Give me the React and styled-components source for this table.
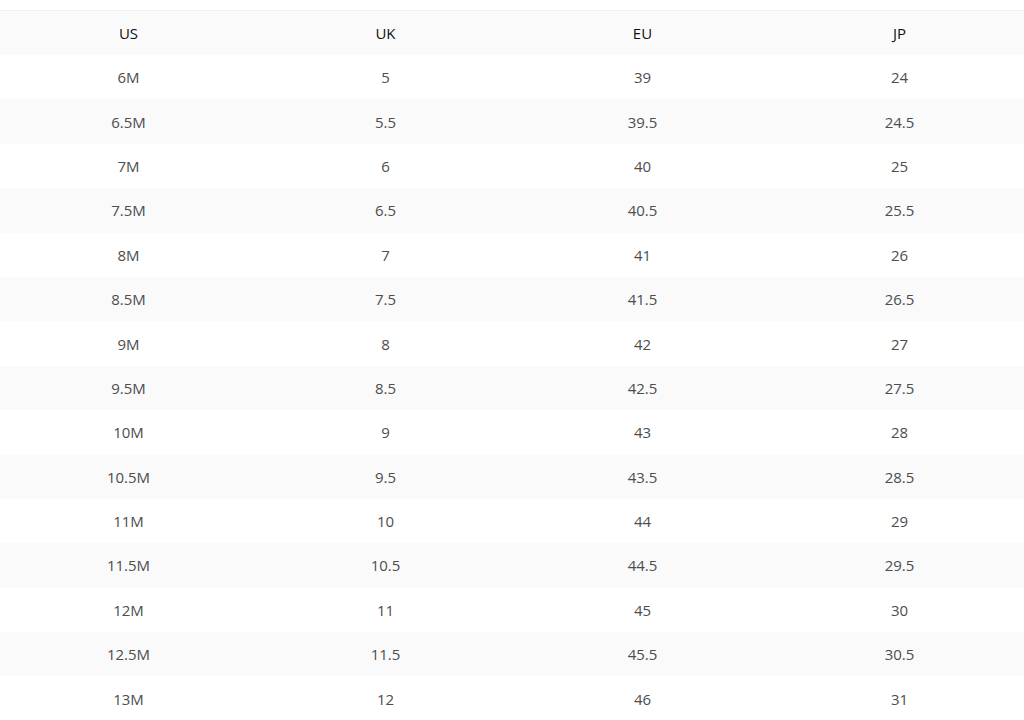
import React from "react";
import styled, { createGlobalStyle } from "styled-components";

const GlobalStyle = createGlobalStyle`
  html, body {
    margin: 0;
    padding: 0;
    background: #fff;
    overflow: hidden;
  }
  body {
    font-family: "Open Sans", "Noto Sans", Arial, sans-serif;
  }
`;

const Page = styled.div`
  padding-top: 10px;
`;

const Table = styled.table`
  width: 1028px;
  border-collapse: collapse;
  table-layout: fixed;
  border-top: 1px solid #f1f1f3;
`;

const HeadCell = styled.th`
  height: 44px;
  padding: 0;
  font-size: 15px;
  line-height: 20px;
  font-weight: 500;
  color: #111;
  text-align: center;
  background: #fafafb;
`;

const Row = styled.tr`
  background: ${(p) => (p.$shaded ? "#fafafb" : "#fff")};
`;

const Cell = styled.td`
  height: 44.4px;
  padding: 0;
  font-size: 15px;
  line-height: 20px;
  color: #4d4d4d;
  text-align: center;
`;

const sizes = [
  ["6M", "5", "39", "24"],
  ["6.5M", "5.5", "39.5", "24.5"],
  ["7M", "6", "40", "25"],
  ["7.5M", "6.5", "40.5", "25.5"],
  ["8M", "7", "41", "26"],
  ["8.5M", "7.5", "41.5", "26.5"],
  ["9M", "8", "42", "27"],
  ["9.5M", "8.5", "42.5", "27.5"],
  ["10M", "9", "43", "28"],
  ["10.5M", "9.5", "43.5", "28.5"],
  ["11M", "10", "44", "29"],
  ["11.5M", "10.5", "44.5", "29.5"],
  ["12M", "11", "45", "30"],
  ["12.5M", "11.5", "45.5", "30.5"],
  ["13M", "12", "46", "31"],
];

export default function App() {
  return (
    <>
      <GlobalStyle />
      <Page>
        <Table>
          <thead>
            <tr>
              <HeadCell>US</HeadCell>
              <HeadCell>UK</HeadCell>
              <HeadCell>EU</HeadCell>
              <HeadCell>JP</HeadCell>
            </tr>
          </thead>
          <tbody>
            {sizes.map((row, i) => (
              <Row key={row[0]} $shaded={i % 2 === 1}>
                {row.map((v, j) => (
                  <Cell key={j}>{v}</Cell>
                ))}
              </Row>
            ))}
          </tbody>
        </Table>
      </Page>
    </>
  );
}
